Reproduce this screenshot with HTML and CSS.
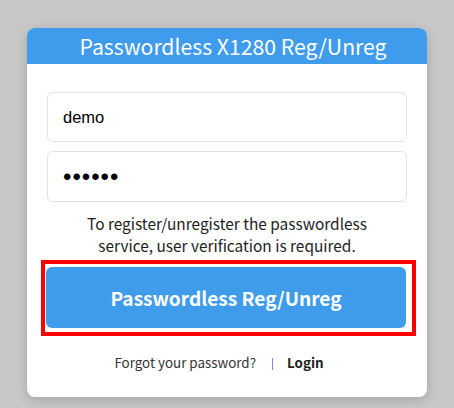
FILE: index.html
```html
<!DOCTYPE html>
<html>
<head>
<meta charset="utf-8">
<link rel="stylesheet" href="styles.css">
</head>
<body>
<div class="card">
  <div class="card-header">Passwordless X1280 Reg/Unreg</div>
  <div class="card-body">
    <div class="field"><input class="input" type="text" value="demo"></div>
    <div class="field field-pw"><input class="input" type="password" value="123456"></div>
    <p class="notice">To register/unregister the passwordless<br>service, user verification is required.</p>
    <div class="highlight">
      <button class="btn-primary" type="button">Passwordless Reg/Unreg</button>
    </div>
    <div class="links">
      <a class="link" href="#">Forgot your password?</a>
      <span class="sep" aria-hidden="true"></span>
      <a class="link link-bold" href="#">Login</a>
    </div>
  </div>
</div>
</body>
</html>
```
FILE: styles.css
```css
html, body {
  margin: 0;
  padding: 0;
}
body {
  background: #c8c8c8;
  width: 454px;
  height: 408px;
  overflow: hidden;
  font-family: "Noto Sans CJK KR", "Source Sans Pro", "Noto Sans", sans-serif;
  padding-top: 28px;
  box-sizing: border-box;
}
.card {
  width: 400px;
  margin: 0 auto;
  background: #fff;
  border-radius: 8px;
  box-shadow: 0 3px 12px rgba(0, 0, 0, 0.18);
  overflow: hidden;
}
.card-header {
  background: #3f9cec;
  color: #fff;
  height: 36px;
  line-height: 36px;
  font-size: 21.2px;
  text-align: center;
  padding-left: 12px;
}
.card-body {
  padding: 28px 20px 24px 20px;
}
.field {
  margin: 0;
}
.field-pw {
  margin-top: 9px;
}
.input {
  display: block;
  box-sizing: border-box;
  width: 360px;
  height: 50px;
  border: 1px solid #e2e2e2;
  border-radius: 6px;
  padding: 0 15px;
  font-family: "Liberation Sans", Arial, sans-serif;
  font-size: 16.5px;
  color: #000;
  background: #fff;
  outline: none;
}
.field-pw .input {
  height: 51px;
  font-size: 24px;
  letter-spacing: 1px;
}
.notice {
  margin: 10px 0 0 0;
  font-size: 15.4px;
  line-height: 22px;
  color: #1e1e1e;
  text-align: center;
}
.highlight {
  margin: 4px -9px 0 -6px;
  border: 4px solid #ff0000;
  padding: 3px 6px 4px 1px;
}
.btn-primary {
  display: block;
  width: 360px;
  height: 61px;
  border: none;
  border-radius: 6px;
  background: #3e9ceb;
  color: #fff;
  font-family: "Noto Sans CJK KR", "Source Sans Pro", "Noto Sans", sans-serif;
  font-weight: 700;
  font-size: 19.1px;
  cursor: pointer;
}
.links {
  margin-top: 15px;
  padding-right: 16px;
  display: flex;
  justify-content: center;
  align-items: center;
  font-size: 13.4px;
  line-height: 22px;
}
.link {
  color: #333;
  text-decoration: none;
}
.link-bold {
  font-weight: 700;
  color: #222;
}
.sep {
  display: inline-block;
  width: 1px;
  height: 12px;
  margin: 3px 14px 0 16px;
  background: #8a84d6;
}
```
